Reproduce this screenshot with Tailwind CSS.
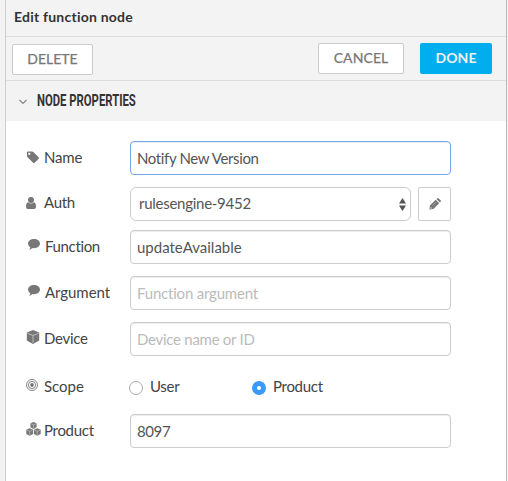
<!DOCTYPE html>
<html lang="en">
<head>
<meta charset="utf-8">
<title>Edit function node</title>
<script src="https://cdn.jsdelivr.net/npm/@tailwindcss/browser@4"></script>
</head>
<body class="bg-[#f3f3f3] font-['Lato',sans-serif] text-[15px] text-[#444]">
<main class="ml-[5px] flex h-[481px] w-[502px] flex-col overflow-hidden border-x border-l-[#cfcfcf] border-r-[#b8b8b8] bg-white">
  <header class="h-[37px] shrink-0 border-b border-[#dcdcdc] bg-[#f3f3f3] pl-2 text-[14px] leading-[34px] font-bold tracking-[.22px] text-[#333]">Edit function node</header>
  <div class="flex h-11 shrink-0 items-start border-b border-[#dcdcdc] bg-[#f3f3f3] pt-[6px] pr-[14px] pl-[6px] text-[14px] leading-[28px] text-[#777]">
    <button class="mt-px h-[31px] w-[81px] rounded-[2px] border border-[#ccc] bg-white pb-[2px] [-webkit-text-stroke:.25px_#777]">DELETE</button>
    <button class="ml-auto h-[31px] w-[86px] rounded-[2px] border border-[#ccc] bg-white pb-px tracking-[.1px] [-webkit-text-stroke:.25px_#777]">CANCEL</button>
    <button class="ml-4 h-[31px] w-[72px] rounded-[2px] bg-[#00aeef] pb-px font-bold tracking-[.1px] text-[#f0f0f0]">DONE</button>
  </div>
  <div class="flex h-10 shrink-0 items-center bg-[#f3f3f3] pl-[13px]">
    <svg class="mt-[2px] h-[6px] w-[8px]" viewBox="0 0 8 6" fill="none" stroke="#888" stroke-width="1.2"><path d="M.5 1 4 4.5 7.5 1"/></svg>
    <h2 class="ml-[10px] origin-left scale-x-[.665] font-['Roboto',sans-serif] text-[17px] font-bold whitespace-nowrap text-[#333]">NODE PROPERTIES</h2>
  </div>
  <form class="flex flex-col pt-5 pl-5">
    <div class="flex h-[34px]">
      <label class="flex h-8 w-[104px] items-center tracking-[-.2px]"><svg class="mr-[5px] ml-px h-[13px] w-[12px]" viewBox="0 0 12 13" fill="#777"><path fill-rule="evenodd" d="M0 1.500Q0 .5 1 .5h4q.9 0 1.600.7l5 5q.8.8 0 1.600l-3.900 4q-.8.7-1.600 0l-5.300-5.200Q0 5.900 0 5zM2.300 1.700a1.100 1.100 0 1 0 .01 0z"/></svg>Name</label>
      <input class="h-[34px] w-[321px] rounded-[4px] border border-[#72a7e8] px-[6px] tracking-[-.37px] text-[#555] shadow-[inset_0_1px_1px_rgba(0,0,0,.075)]" value="Notify New Version">
    </div>
    <div class="mt-3 flex h-[34px]">
      <label class="flex h-[31px] w-[104px] items-center tracking-[-.3px]"><svg class="mr-[8px] h-[12px] w-[10px]" viewBox="0 0 10 12" fill="#777"><circle cx="5" cy="3" r="3"/><path d="M2 5.200Q5 7.800 8 5.200 10 5.600 10 10q0 2-1.800 2H1.800Q0 12 0 10 0 5.600 2 5.200z"/></svg>Auth</label>
      <div class="flex h-[34px] w-[281px] items-center justify-between rounded-[6px] border border-[#ccc] pr-[4px] pl-[8px] tracking-[-.27px] text-[#555]"><span class="-mt-[2px]">rulesengine-9452</span><svg class="h-[13px] w-[7px]" viewBox="0 0 7 13" fill="#555"><path d="M3.500 0 7 5.500H0zM0 7.500h7L3.500 13z"/></svg></div>
      <button type="button" class="ml-[7px] flex h-[34px] w-[33px] items-center justify-center rounded-[2px] border border-[#ccc]"><svg class="h-[12px] w-[12px]" viewBox="0 0 12 12" fill="#777"><path fill-rule="evenodd" d="M.9 7.600 6.700 1.800l3.500 3.500-5.800 5.800-4 .5zM1.700 8.900 1.400 10.600 3.100 10.300zM7.400 1.100 8.200.4q.8-.700 1.500 0l1.900 1.900q.7.700 0 1.500l-.7.8z"/><path d="m3.600 7.500 3.600-3.600" stroke="#bbb" stroke-width=".6"/></svg></button>
    </div>
    <div class="mt-[9px] flex h-[34px]">
      <label class="flex h-8 w-[104px] items-center tracking-[-.35px]"><svg class="-mt-[3px] mr-[5px] ml-[2px] h-[11px] w-[12px]" viewBox="0 0 13 11" preserveAspectRatio="none" fill="#777"><path d="M6.500 0C10 0 13 2 13 4.600S10 9.300 6.500 9.300Q5.500 9.300 4.700 9.100 3 10.700 1.200 10.800 2.400 9.700 2.500 8.300 0 6.900 0 4.600C0 2 3 0 6.500 0z"/></svg>Function</label>
      <input class="h-[34px] w-[321px] rounded-[4px] border border-[#ccc] px-[6px] text-[#555] shadow-[inset_0_1px_1px_rgba(0,0,0,.075)]" value="updateAvailable">
    </div>
    <div class="mt-3 flex h-[34px]">
      <label class="flex h-8 w-[104px] items-center tracking-[-.05px]"><svg class="-mt-[3px] mr-[5px] ml-[2px] h-[11px] w-[12px]" viewBox="0 0 13 11" preserveAspectRatio="none" fill="#777"><path d="M6.500 0C10 0 13 2 13 4.600S10 9.300 6.500 9.300Q5.500 9.300 4.700 9.100 3 10.700 1.200 10.800 2.400 9.700 2.500 8.300 0 6.900 0 4.600C0 2 3 0 6.500 0z"/></svg>Argument</label>
      <input class="h-[34px] w-[321px] rounded-[4px] border border-[#ccc] px-[6px] tracking-[-.2px] shadow-[inset_0_1px_1px_rgba(0,0,0,.075)] placeholder:text-[#bbb]" placeholder="Function argument">
    </div>
    <div class="mt-3 flex h-[34px]">
      <label class="flex h-8 w-[104px] items-center tracking-[-.3px]"><svg class="-mt-[2px] mr-[4px] h-[14px] w-[14px]" viewBox="0 0 14 14"><path fill="#777" d="m7 0 6.200 2.600v8L7 14 .8 10.600v-8z"/><path d="m1.500 3.300 5.500 2.200 5.500-2.200M7 5.500v7.300" fill="none" stroke="#ccc" stroke-width=".8"/></svg>Device</label>
      <input class="h-[34px] w-[321px] rounded-[4px] border border-[#ccc] px-[6px] tracking-[-.27px] shadow-[inset_0_1px_1px_rgba(0,0,0,.075)] placeholder:text-[#bbb]" placeholder="Device name or ID">
    </div>
    <div class="mt-[14px] flex h-8">
      <div class="flex h-8 w-[103px] items-center"><svg class="-mt-[3px] mr-[6px] h-[12px] w-[12px]" viewBox="0 0 12 12" fill="none" stroke="#777"><circle cx="6" cy="6" r="5.500" stroke-width=".9"/><circle cx="6" cy="6" r="3.600" stroke-width=".9"/><circle cx="6" cy="6" r="1.900" fill="#777" stroke="none"/></svg>Scope</div>
      <label class="flex h-8 w-[123px] items-center tracking-[-.3px]"><span class="mt-[3px] mr-[7px] h-[14px] w-[14px] rounded-full border border-[#aaa] bg-white"></span>User</label>
      <label class="flex h-8 items-center tracking-[-.3px]"><span class="mt-[3px] mr-[7px] h-[14px] w-[14px] rounded-full border-[5px] border-[#3b99fc] bg-white"></span>Product</label>
    </div>
    <div class="mt-3 flex h-[34px]">
      <label class="flex h-8 w-[104px] items-center tracking-[-.3px]"><svg class="-mt-[2px] mr-[3px] h-[14px] w-[15px]" viewBox="0 0 15 14"><path fill="#777" d="m7.500 0 3.100 1.300v4L7.500 7 4.400 5.300v-4zM3.700 6.200l3.400 1.500v4.200L3.700 13.700.3 11.900V7.700zM11.300 6.200l3.400 1.500v4.200l-3.400 1.800-3.400-1.800V7.700z"/><path d="m5 1.800 2.500 1L10 1.800M7.500 2.800V6M1 8.200l2.700 1.100 2.700-1.100M3.700 9.300V13M8.600 8.200l2.700 1.100L14 8.200M11.300 9.300V13" fill="none" stroke="#ccc" stroke-width=".6"/></svg>Product</label>
      <input class="h-[34px] w-[321px] rounded-[4px] border border-[#ccc] px-[6px] tracking-[-.4px] text-[#555] shadow-[inset_0_1px_1px_rgba(0,0,0,.075)]" value="8097">
    </div>
  </form>
</main>
</body>
</html>
